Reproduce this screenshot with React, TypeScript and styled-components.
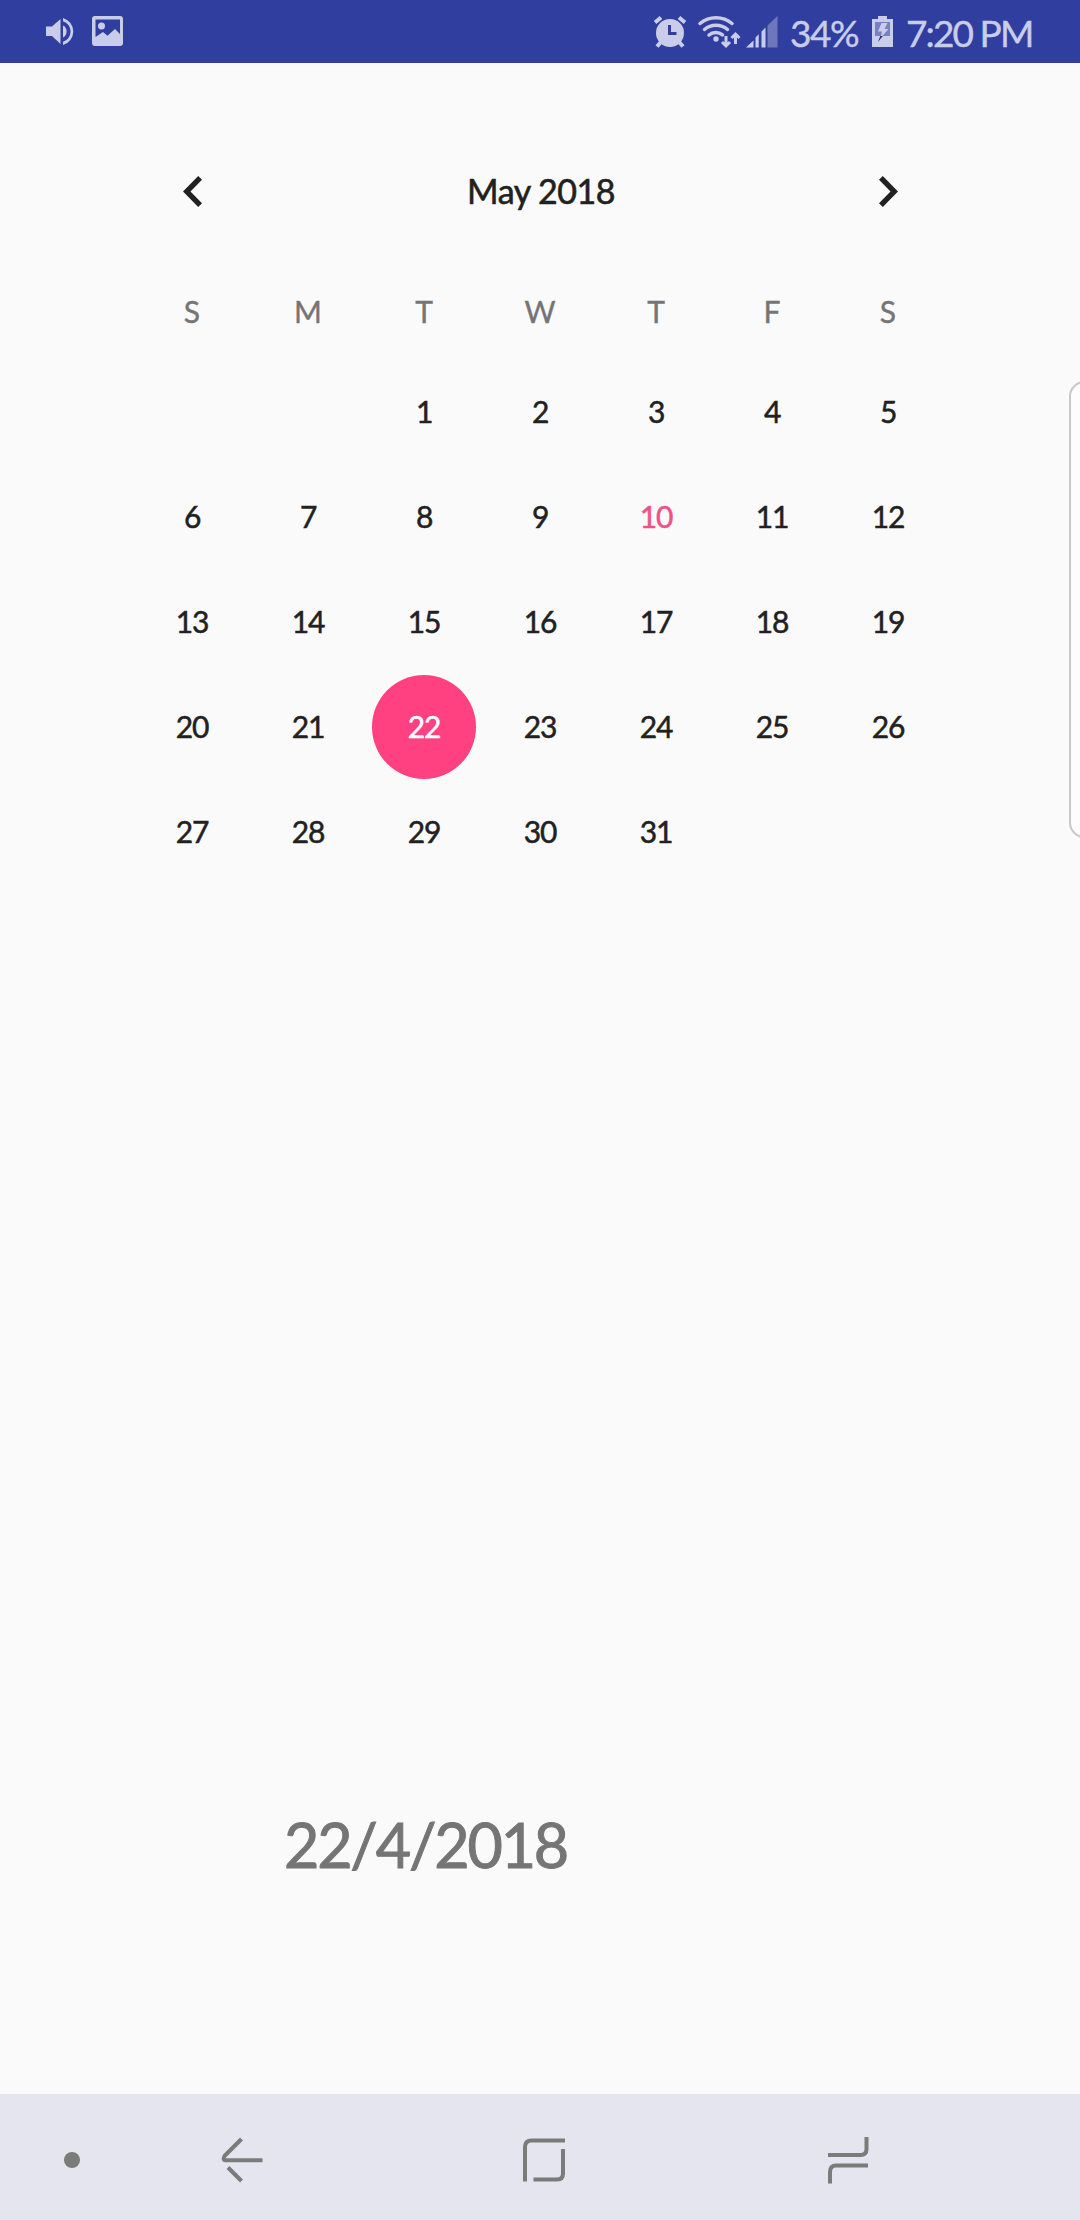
import React from 'react';
import styled, { createGlobalStyle, css } from 'styled-components';

const GlobalStyle = createGlobalStyle`
  * { box-sizing: border-box; }
  body { margin: 0; background: #fafafa; }
`;

const Screen = styled.div`
  position: relative;
  display: flex;
  flex-direction: column;
  width: 1080px;
  height: 2220px;
  overflow: hidden;
  background: #fafafa;
  color: #212121;
  font-family: Lato, 'Open Sans', sans-serif;
`;

const StatusBar = styled.header`
  display: flex;
  justify-content: space-between;
  height: 63px;
  padding: 0 50px 0 46px;
  background: #303f9f;
  color: #cacde9;
`;

const StatusGroup = styled.div`
  display: flex;
  align-items: flex-start;
`;

const StatusIcon = styled.svg<{ $top: number; $gap?: number }>`
  display: block;
  flex: none;
  margin-top: ${(p) => p.$top}px;
  margin-right: ${(p) => p.$gap ?? 0}px;
  fill: currentColor;
`;

const StatusText = styled.span<{ $width: number; $gap?: number; $spacing: number }>`
  flex: none;
  width: ${(p) => p.$width}px;
  margin-right: ${(p) => p.$gap ?? 0}px;
  font-size: 37px;
  line-height: 65px;
  letter-spacing: ${(p) => p.$spacing}px;
  white-space: nowrap;
  -webkit-text-stroke: 0.4px currentColor;
`;

const Content = styled.main`
  display: flex;
  flex: 1;
  flex-direction: column;
`;

const Calendar = styled.section`
  width: 812px;
  margin: 75px 0 0 134px;
`;

const MonthBar = styled.div`
  display: grid;
  grid-template-columns: 116px 1fr 116px;
  align-items: center;
  height: 107px;
  margin-bottom: 19px;
`;

const MonthButton = styled.button`
  display: flex;
  justify-content: center;
  padding: 0;
  border: 0;
  background: none;
  color: inherit;
`;

const MonthTitle = styled.h1`
  margin: 0;
  padding: 0 0 2px 2px;
  font-size: 34px;
  font-weight: 400;
  line-height: 40px;
  letter-spacing: -0.5px;
  text-align: center;
  -webkit-text-stroke: 0.6px currentColor;
`;

const WeekHeader = styled.div`
  display: grid;
  grid-template-columns: repeat(7, 116px);
  height: 95px;
`;

const WeekdayName = styled.span`
  display: flex;
  align-items: center;
  justify-content: center;
  padding-bottom: 2px;
  color: #757575;
  font-size: 30px;
  -webkit-text-stroke: 0.4px currentColor;
`;

const DayGrid = styled.div`
  display: grid;
  grid-template-columns: repeat(7, 116px);
  grid-auto-rows: 105px;
  justify-items: center;
  align-items: center;
`;

type DayState = 'plain' | 'today' | 'selected';

const Day = styled.span<{ $state: DayState }>`
  display: flex;
  align-items: center;
  justify-content: center;
  width: 104px;
  height: 104px;
  padding-bottom: 2px;
  border-radius: 50%;
  font-size: 30px;
  letter-spacing: -1.2px;
  -webkit-text-stroke: 0.5px currentColor;
  ${(p) => p.$state === 'today' && css`color: #f0508a;`}
  ${(p) => p.$state === 'selected' && css`
    background: #ff4081;
    color: #ffffff;
  `}
`;

const SelectedDate = styled.p`
  margin: auto 0 213px 284px;
  font-size: 61px;
  line-height: 72px;
  letter-spacing: -2.2px;
  color: #757575;
  -webkit-text-stroke: 1px currentColor;
`;

const EdgeHandle = styled.div`
  position: absolute;
  top: 381px;
  right: -20px;
  width: 31px;
  height: 457px;
  border: 2px solid #c8c8c8;
  border-radius: 17px;
  background: #fdfdfd;
`;

const NavBar = styled.nav`
  display: flex;
  align-items: center;
  height: 126px;
  padding: 6px 0 0 64px;
  background: #e5e5ef;
  color: #7b7b7b;
`;

const NavDot = styled.span`
  width: 16px;
  height: 16px;
  margin-right: 141px;
  border-radius: 50%;
  background: currentColor;
`;

const NavIcon = styled.svg<{ $gap?: number }>`
  flex: none;
  margin-right: ${(p) => p.$gap ?? 0}px;
  fill: none;
  stroke: currentColor;
  stroke-width: 4;
`;

const weekdays = ['S', 'M', 'T', 'W', 'T', 'F', 'S'];
const FIRST_COLUMN = 2;
const days = Array.from({ length: 31 }, (_, i) => i + 1);

const stateOf = (day: number): DayState =>
  day === 22 ? 'selected' : day === 10 ? 'today' : 'plain';

const Chevron = ({ flip }: { flip?: boolean }) => (
  <svg width="19" height="31" viewBox="0 0 19 31" fill="currentColor">
    <path
      transform={flip ? 'translate(19 0) scale(-1 1)' : undefined}
      d="M15.200 0L19 3.800 7.500 15.500 19 27.200 15.200 31 0 15.500z"
    />
  </svg>
);

export default function App() {
  return (
    <>
      <GlobalStyle />
      <Screen>
        <StatusBar>
          <StatusGroup>
            <StatusIcon width="29" height="28" viewBox="0 0 29 28" $top={18} $gap={17}>
              <path d="M0 8.5h6L14.5 1v25L6 18H0z" />
              <path d="M17 7.5a6.8 6.8 0 0 1 0 12z" />
              <path d="M17 0a14 14 0 0 1 0 27v-3.2a10.8 10.8 0 0 0 0-20.6z" />
            </StatusIcon>
            <StatusIcon width="31" height="30" viewBox="0 0 31 30" $top={16}>
              <path
                fillRule="evenodd"
                d="M3 0h25a3 3 0 0 1 3 3v24a3 3 0 0 1-3 3H3a3 3 0 0 1-3-3V3a3 3 0 0 1 3-3zM3.5 3.5V21l7.5-5 4.5 3.7L23 13l5 5V3.5z"
              />
              <circle cx="9.5" cy="10" r="3.5" />
            </StatusIcon>
          </StatusGroup>
          <StatusGroup>
            <StatusIcon width="32" height="32" viewBox="0 0 32 32" $top={16} $gap={12}>
              <circle cx="16" cy="17" r="14" />
              <path
                fill="none"
                stroke="currentColor"
                strokeWidth="4"
                d="M1 6.5l6-5M31 6.5l-6-5M6.5 26.5L3 30.5M25.5 26.5l3.5 4"
              />
              <path fill="none" stroke="#303f9f" strokeWidth="3" d="M15.5 9v8.5h7" />
            </StatusIcon>
            <StatusIcon width="43" height="34" viewBox="0 0 43 34" $top={15} $gap={5}>
              <g fill="none" stroke="currentColor" strokeWidth="3.5" strokeLinecap="round">
                <path d="M2 8.5a25 25 0 0 1 32 0" />
                <path d="M6.5 14.5a18 18 0 0 1 23 0" />
                <path d="M11 20a10.5 10.5 0 0 1 13.5-.2" />
              </g>
              <circle cx="18" cy="24" r="2.7" />
              <path fill="none" stroke="currentColor" strokeWidth="3" d="M28 21v10M24 27l4 4 4-4M37.5 29V19M33.5 23l4-4 4 4" />
            </StatusIcon>
            <StatusIcon width="32" height="32" viewBox="0 0 32 32" $top={16} $gap={12}>
              <path d="M0 31.5l7.5-7v7zM9.5 31.5V21.5l3.2-3.2v13.2zM15.5 31.5V15.5l4-4v20z" />
              <path opacity=".4" d="M21.5 31.5V9.5L31.5 0v31.5z" />
            </StatusIcon>
            <StatusText $width={68} $gap={14} $spacing={-1.4}>34%</StatusText>
            <StatusIcon width="21" height="32" viewBox="0 0 21 32" $top={15} $gap={13}>
              <path d="M6 1h9v3h6v28H0V4h6z" />
              <path fill="#7780c0" d="M3 7h15v14H3z" />
              <path d="M9.5 8h6l-3 6h4L8.5 23l1.5-6.500H6z" />
              <path fill="#232b66" d="M8.3 21h2.5L6 27z" />
            </StatusIcon>
            <StatusText $width={124} $spacing={-1.9}>7:20 PM</StatusText>
          </StatusGroup>
        </StatusBar>

        <Content>
          <Calendar>
            <MonthBar>
              <MonthButton aria-label="Previous month">
                <Chevron />
              </MonthButton>
              <MonthTitle>May 2018</MonthTitle>
              <MonthButton aria-label="Next month">
                <Chevron flip />
              </MonthButton>
            </MonthBar>
            <WeekHeader>
              {weekdays.map((name, i) => (
                <WeekdayName key={i}>{name}</WeekdayName>
              ))}
            </WeekHeader>
            <DayGrid>
              {Array.from({ length: FIRST_COLUMN }, (_, i) => (
                <span key={`blank-${i}`} />
              ))}
              {days.map((day) => (
                <Day key={day} $state={stateOf(day)}>
                  {day}
                </Day>
              ))}
            </DayGrid>
          </Calendar>
          <SelectedDate>22/4/2018</SelectedDate>
        </Content>

        <EdgeHandle />

        <NavBar>
          <NavDot />
          <NavIcon width="42" height="46" viewBox="0 0 42 46" $gap={260}>
            <path d="M20.5 2L3.5 19Q1.5 23.2 4.5 23.2H41.5M7 30.5L20.5 44" />
          </NavIcon>
          <NavIcon width="42" height="44" viewBox="0 0 42 44" $gap={262}>
            <path d="M2 43.5V9Q2 2.5 8.5 2.5H42M40 11v24.5Q40 41.5 34 41.5H10.5" />
          </NavIcon>
          <NavIcon width="42" height="48" viewBox="0 0 42 48">
            <path d="M1 19H33.5Q39.5 19 39.5 13V1M3 47.5V36Q3 29.5 9 29.5H41" />
          </NavIcon>
        </NavBar>
      </Screen>
    </>
  );
}
